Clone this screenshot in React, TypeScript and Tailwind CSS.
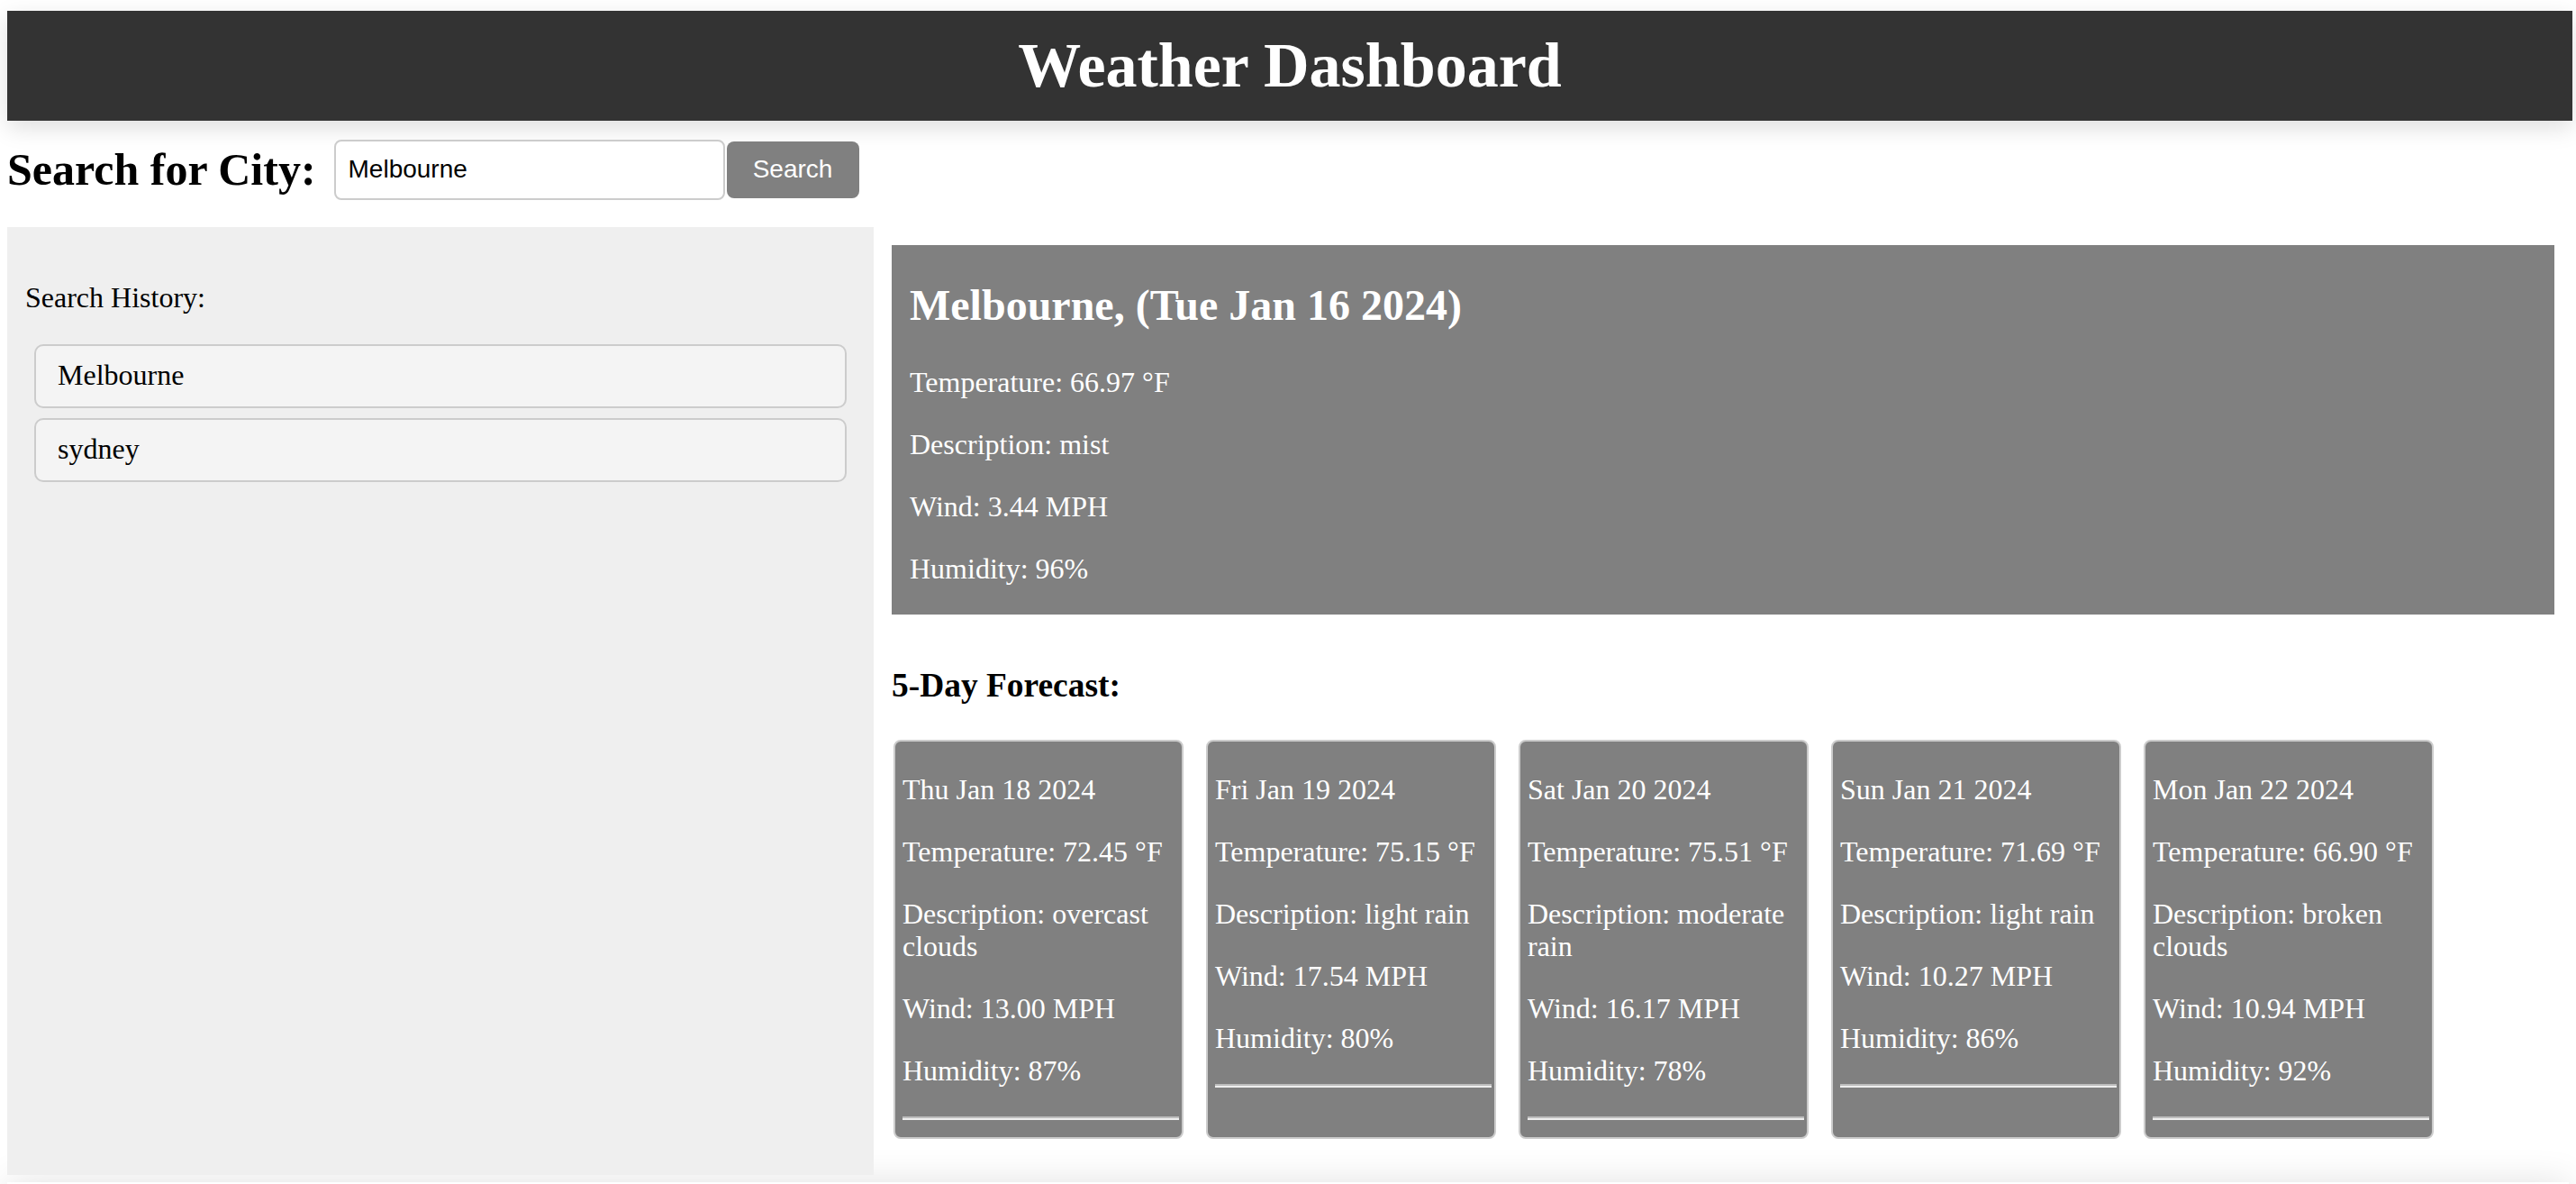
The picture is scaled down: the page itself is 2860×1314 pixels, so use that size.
const forecast = [
  { date: "Thu Jan 18 2024", temp: "72.45", desc: "overcast clouds", wind: "13.00", hum: "87" },
  { date: "Fri Jan 19 2024", temp: "75.15", desc: "light rain", wind: "17.54", hum: "80" },
  { date: "Sat Jan 20 2024", temp: "75.51", desc: "moderate rain", wind: "16.17", hum: "78" },
  { date: "Sun Jan 21 2024", temp: "71.69", desc: "light rain", wind: "10.27", hum: "86" },
  { date: "Mon Jan 22 2024", temp: "66.90", desc: "broken clouds", wind: "10.94", hum: "92" },
];

const history = ["Melbourne", "sydney"];

function ForecastCard({ day }: { day: (typeof forecast)[number] }) {
  return (
    <div className="w-[322px] rounded-[8px] border-2 border-[#cccccc] bg-[#808080] pl-2 pr-[3px] pt-[2px] pb-[3px] text-white">
      <p className="mt-[33px]">{day.date}</p>
      <p className="mt-[33px]">Temperature: {day.temp} °F</p>
      <p className="mt-[33px]">Description: {day.desc}</p>
      <p className="mt-[33px]">Wind: {day.wind} MPH</p>
      <p className="mt-[33px]">Humidity: {day.hum}%</p>
      <div className="mt-[33px] mb-4 border-t-2 border-b-2 border-t-[#bdbdbd] border-b-[#eeeeee]" />
    </div>
  );
}

export default function App() {
  return (
    <div className="h-[1314px] overflow-hidden bg-white font-['Liberation_Serif',serif] text-[32px] leading-[36px] text-black">
      <header className="ml-2 mt-3 flex h-[122px] w-[2848px] items-center justify-center bg-[#333333] shadow-[0_8px_24px_rgba(0,0,0,0.13)]">
        <h1 className="text-[70px] font-bold leading-[80px] text-white">Weather Dashboard</h1>
      </header>

      <div className="ml-2 mt-5 flex h-[68px] items-center">
        <h2 className="text-[50px] font-bold leading-[57px]">Search for City:</h2>
        <input
          className="ml-5 h-[67px] w-[434px] rounded-[8px] border-2 border-[#cccccc] bg-white px-[14px] font-['Liberation_Sans',sans-serif] text-[28px] text-black outline-none"
          defaultValue="Melbourne"
        />
        <button className="ml-[2px] h-[63px] w-[147px] rounded-[8px] bg-[#808080] font-['Liberation_Sans',sans-serif] text-[28px] text-white">
          Search
        </button>
      </div>

      <div className="ml-2 mt-[30px] flex w-[2848px]">
        <aside className="w-[962px] bg-[#efefef] px-5 pt-5">
          <p className="mt-10">Search History:</p>
          <ul className="mt-[34px] px-[10px]">
            {history.map((city) => (
              <li
                key={city}
                className="mb-[11px] rounded-[10px] border-2 border-[#cccccc] bg-[#f4f4f4] pl-6 pt-[14px] pb-[17px]"
              >
                {city}
              </li>
            ))}
          </ul>
        </aside>

        <main className="flex-1 px-5 pt-5 pb-10">
          <section className="bg-[#808080] px-5 pt-[39px] pb-[33px] text-white">
            <h2 className="text-[48px] font-bold leading-[55px]">Melbourne, (Tue Jan 16 2024)</h2>
            <p className="mt-10">Temperature: 66.97 °F</p>
            <p className="mt-[33px]">Description: mist</p>
            <p className="mt-[33px]">Wind: 3.44 MPH</p>
            <p className="mt-[33px]">Humidity: 96%</p>
          </section>

          <h3 className="mt-[57px] text-[37.44px] font-bold leading-[43px]">5-Day Forecast:</h3>
          <div className="mt-[39px] ml-[2px] flex gap-[25px]">
            {forecast.map((day) => (
              <ForecastCard key={day.date} day={day} />
            ))}
          </div>
        </main>
      </div>

      <footer className="mx-2 mt-2 h-[80px] bg-white shadow-[0_0_40px_rgba(0,0,0,0.12)]" />
    </div>
  );
}
